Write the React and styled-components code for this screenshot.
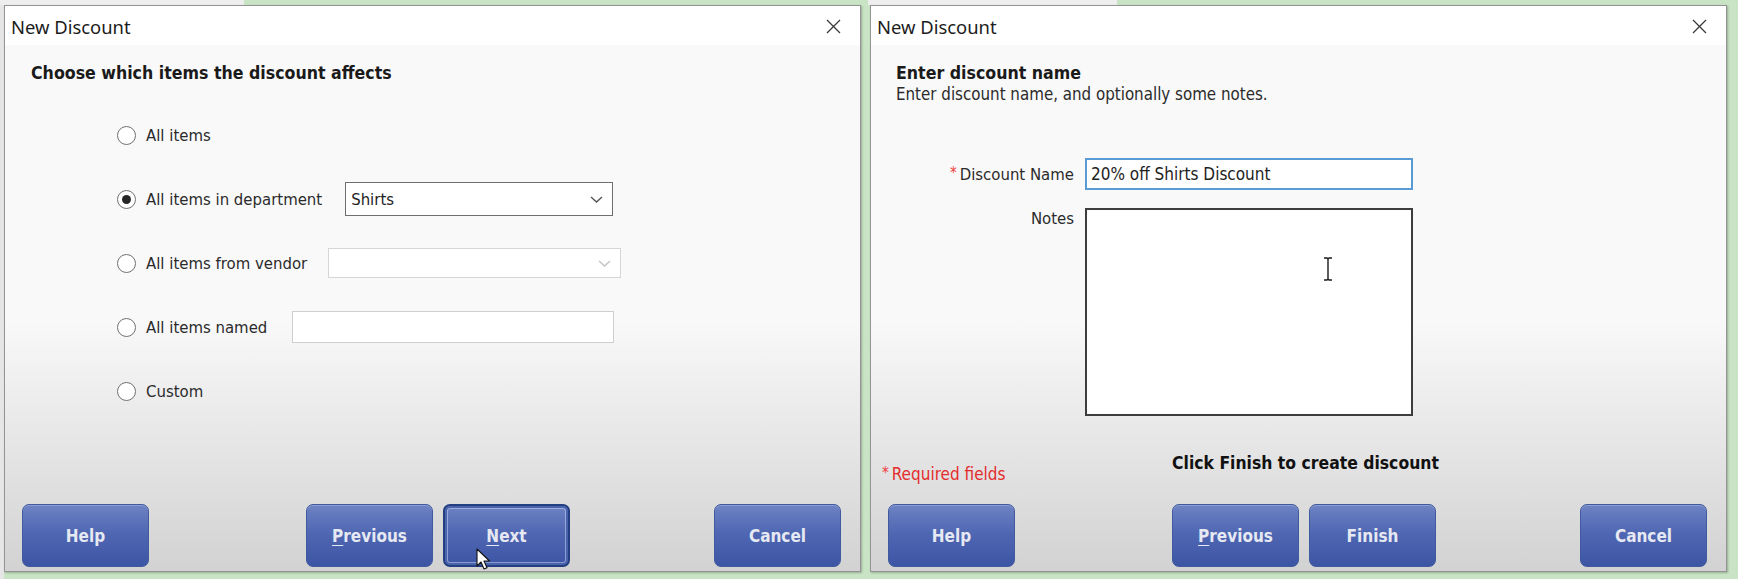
import React from 'react';
import styled, { createGlobalStyle } from 'styled-components';

const GlobalStyle = createGlobalStyle`
  html, body {
    margin: 0;
    padding: 0;
  }
  body {
    width: 1738px;
    height: 579px;
    overflow: hidden;
    background:
      linear-gradient(90deg, #eeeeee 0 244px, #c9e4c5 244px 868px, #eeeeee 868px 1117px, #c9e4c5 1117px) top left / 100% 5px no-repeat,
      linear-gradient(90deg, #e6e6e6 0 4px, #c9e4c5 4px);
    font-family: "DejaVu Sans Condensed", "DejaVu Sans", sans-serif;
  }
`;

const Desktop = styled.div`
  display: flex;
  gap: 9px;
  padding: 5px 0 0 4px;
  height: 579px;
  box-sizing: border-box;
`;

const Window = styled.section`
  width: 857px;
  height: 567px;
  display: flex;
  flex-direction: column;
  box-sizing: border-box;
  border: 1px solid #949494;
  box-shadow: 1px 1px 2px rgba(0, 0, 0, 0.25);
  background: #fff;
`;

const TitleBar = styled.header`
  height: 39px;
  flex: none;
  display: flex;
  align-items: center;
  justify-content: space-between;
  padding: 2px 19px 0 6px;
  box-sizing: border-box;
  background: #fff;
  font-family: "Noto Sans", sans-serif;
  font-size: 18.4px;
  color: #1c1c1c;
`;

const CloseButton = styled.span`
  display: flex;
  width: 15px;
  height: 15px;
`;

const Body = styled.div`
  flex: 1;
  display: flex;
  flex-direction: column;
  background: linear-gradient(#f9f9f9 0, #f9f9f9 52%, #e4e4e4 78%, #d2d2d2 100%);
`;

const Content = styled.div`
  padding: 17px 0 0 ${p => p.$indent}px;
  flex: 1;
  display: flex;
  flex-direction: column;
`;

const Heading = styled.h2`
  margin: 0;
  font-size: 17.6px;
  line-height: 22px;
  font-weight: bold;
  color: #1a1a1a;
`;

const Subtitle = styled.p`
  margin: 0;
  font-size: 16.8px;
  line-height: 20px;
  color: #2b2b2b;
`;

const Options = styled.div`
  display: flex;
  flex-direction: column;
  gap: 30px;
  margin: 34px 0 0 86px;
`;

const OptionRow = styled.label`
  display: flex;
  align-items: center;
  height: 34px;
  font-size: 16.6px;
  color: #2b2b2b;
`;

const Radio = styled.span`
  width: 19px;
  height: 19px;
  flex: none;
  box-sizing: border-box;
  border-radius: 50%;
  border: 1.5px solid #707070;
  background: #fff;
  margin-right: 10px;
  display: flex;
  align-items: center;
  justify-content: center;
  &::after {
    content: "";
    width: 9px;
    height: 9px;
    border-radius: 50%;
    background: ${p => (p.$checked ? '#262626' : 'transparent')};
  }
`;

const Field = styled.div`
  width: ${p => p.$width}px;
  height: ${p => p.$height}px;
  margin-left: ${p => p.$offset}px;
  box-sizing: border-box;
  border: 1px solid ${p => p.$border};
  background: #fff;
  display: flex;
  align-items: center;
  justify-content: space-between;
  padding: 0 9px 0 5px;
  font-size: 16.6px;
  color: #222;
`;

const Chevron = ({ color }) => (
  <svg width="13" height="7" viewBox="0 0 13 7">
    <path d="M1 1l5.5 5 5.5-5" fill="none" stroke={color} strokeWidth="1.4" />
  </svg>
);

const Form = styled.div`
  display: grid;
  grid-template-columns: 178px 328px;
  column-gap: 11px;
  row-gap: 18px;
  margin-top: 54px;
`;

const FormLabel = styled.div`
  text-align: right;
  font-size: 16.6px;
  color: #2b2b2b;
  align-self: ${p => (p.$top ? 'start' : 'center')};
  padding-top: ${p => (p.$top ? 1 : 0)}px;
`;

const Star = styled.span`
  color: #ef3b3b;
  font-size: 15px;
  margin-right: 3px;
  vertical-align: 2px;
`;

const TextBox = styled.div`
  height: 32px;
  box-sizing: border-box;
  border: 2px solid #5b9bd5;
  background: #fff;
  display: flex;
  align-items: center;
  padding-left: 4px;
  font-size: 17px;
  color: #1e1e1e;
`;

const NotesBox = styled.div`
  height: 208px;
  box-sizing: border-box;
  border: 2px solid #3d3d3d;
  background: #fff;
  position: relative;
`;

const IBeam = styled.svg`
  position: absolute;
  left: 236px;
  top: 47px;
`;

const NoteRow = styled.div`
  display: grid;
  grid-template-columns: 1fr auto 1fr;
  align-items: start;
  height: 40px;
  padding: 0 11px;
  margin-bottom: 15px;
`;

const Required = styled.span`
  padding-top: 15px;
  font-size: 17px;
  color: #e42c2c;
`;

const FinishHint = styled.span`
  font-size: 17.4px;
  font-weight: bold;
  color: #111;
  padding-top: 4px;
  margin-left: 14px;
`;

const Footer = styled.footer`
  display: flex;
  justify-content: space-between;
  padding: 0 19px 4px 17px;
`;

const ButtonGroup = styled.div`
  display: flex;
  gap: 10px;
  margin-left: 13px;
`;

const WizardButton = styled.button`
  position: relative;
  width: 127px;
  height: 63px;
  border-radius: 7px;
  border: ${p => (p.$focused ? '2px solid #233f82' : '1px solid #3f5a9e')};
  background: linear-gradient(#6d83c3 0%, #5067b3 45%, #3c55a4 100%);
  box-shadow: ${p => (p.$focused
    ? 'inset 0 0 0 2px #4a63ad, inset 0 0 0 3px rgba(200, 212, 240, 0.55)'
    : 'inset 0 1px 0 rgba(255, 255, 255, 0.22)')};
  color: #e6e9f2;
  font-family: "DejaVu Sans Condensed", "DejaVu Sans", sans-serif;
  font-size: 17px;
  font-weight: bold;
  padding: 0;
  u {
    text-underline-offset: 3px;
  }
`;

const Pointer = styled.svg`
  position: absolute;
  left: 31px;
  top: 42px;
`;

const Close = () => (
  <CloseButton>
    <svg width="15" height="15" viewBox="0 0 15 15">
      <path d="M1 1l13 13M14 1L1 14" stroke="#3a3a3a" strokeWidth="1.3" />
    </svg>
  </CloseButton>
);

const DialogFrame = ({ children }) => (
  <Window>
    <TitleBar>
      <span>New Discount</span>
      <Close />
    </TitleBar>
    <Body>{children}</Body>
  </Window>
);

const options = [
  { label: 'All items' },
  { label: 'All items in department', field: { value: 'Shirts', width: 268, height: 34, offset: 23, border: '#6f6f6f', chevron: '#555' }, checked: true },
  { label: 'All items from vendor', field: { value: '', width: 293, height: 30, offset: 21, border: '#d6d6d6', chevron: '#c4c4c4' } },
  { label: 'All items named', field: { value: '', width: 322, height: 32, offset: 25, border: '#cfcfcf' } },
  { label: 'Custom' },
];

const ItemsStep = () => (
  <DialogFrame>
    <Content $indent={26}>
      <Heading>Choose which items the discount affects</Heading>
      <Options>
        {options.map(o => (
          <OptionRow key={o.label}>
            <Radio $checked={o.checked} />
            {o.label}
            {o.field && (
              <Field $width={o.field.width} $height={o.field.height} $offset={o.field.offset} $border={o.field.border}>
                <span>{o.field.value}</span>
                {o.field.chevron && <Chevron color={o.field.chevron} />}
              </Field>
            )}
          </OptionRow>
        ))}
      </Options>
    </Content>
    <Footer>
      <WizardButton>Help</WizardButton>
      <ButtonGroup>
        <WizardButton><u>P</u>revious</WizardButton>
        <WizardButton $focused>
          <u>N</u>ext
          <Pointer width="14" height="22" viewBox="0 0 14 22">
            <path d="M1 1v17l4-4 3 7 3-1.3-3-6.7h5.5z" fill="#fff" stroke="#111" strokeWidth="1.1" strokeLinejoin="round" />
          </Pointer>
        </WizardButton>
      </ButtonGroup>
      <WizardButton>Cancel</WizardButton>
    </Footer>
  </DialogFrame>
);

const NameStep = () => (
  <DialogFrame>
    <Content $indent={25}>
      <Heading>Enter discount name</Heading>
      <Subtitle>Enter discount name, and optionally some notes.</Subtitle>
      <Form>
        <FormLabel><Star>*</Star>Discount Name</FormLabel>
        <TextBox>20% off Shirts Discount</TextBox>
        <FormLabel $top>Notes</FormLabel>
        <NotesBox>
          <IBeam width="10" height="24" viewBox="0 0 10 24">
            <path d="M1 1h3l1 1 1-1h3M5 2v20M1 23h3l1-1 1 1h3" fill="none" stroke="#1a1a1a" strokeWidth="1.4" />
          </IBeam>
        </NotesBox>
      </Form>
    </Content>
    <NoteRow>
      <Required><Star>*</Star>Required fields</Required>
      <FinishHint>Click Finish to create discount</FinishHint>
    </NoteRow>
    <Footer>
      <WizardButton>Help</WizardButton>
      <ButtonGroup>
        <WizardButton><u>P</u>revious</WizardButton>
        <WizardButton>Finish</WizardButton>
      </ButtonGroup>
      <WizardButton>Cancel</WizardButton>
    </Footer>
  </DialogFrame>
);

export default function App() {
  return (
    <>
      <GlobalStyle />
      <Desktop>
        <ItemsStep />
        <NameStep />
      </Desktop>
    </>
  );
}
